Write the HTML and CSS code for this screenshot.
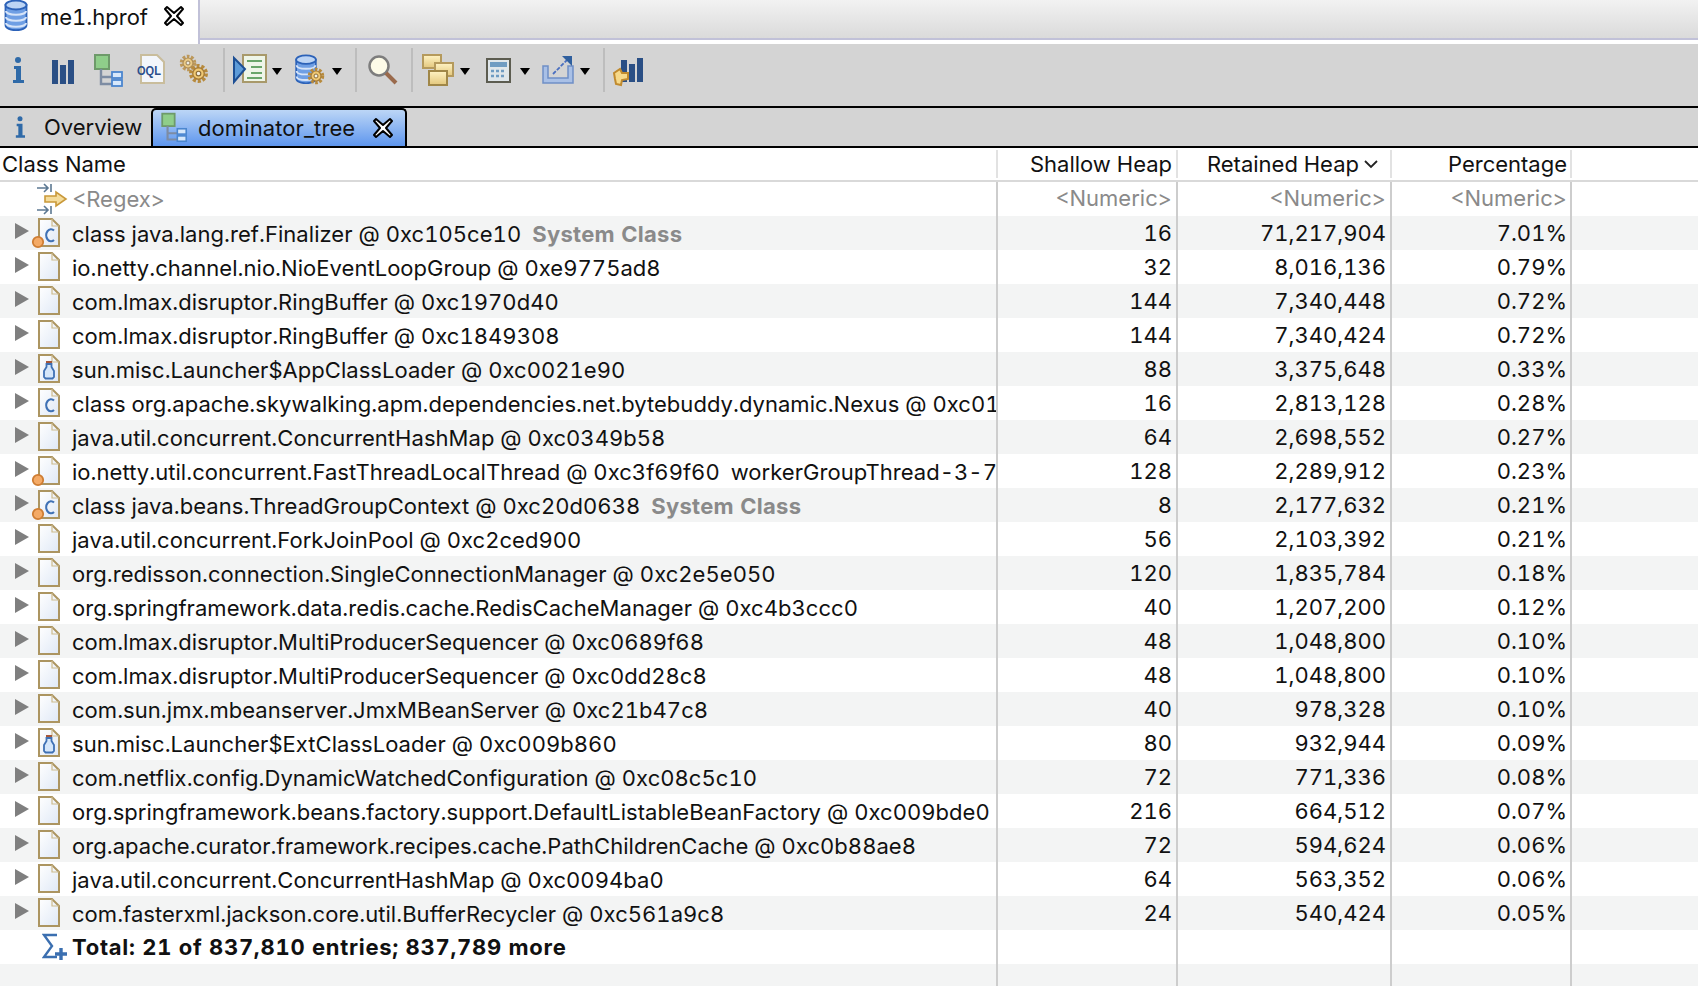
FILE: index.html
```html
<!DOCTYPE html>
<html lang="en">
<head>
  <meta charset="UTF-8" />
  <title>me1.hprof - dominator_tree</title>
  <link rel="stylesheet" href="styles.css">
</head>
<body>
  <svg class="defs" width="0" height="0">
    <defs>
      <linearGradient id="paper" x1="0" y1="0" x2="1" y2="1">
        <stop offset="0" stop-color="#ffffff"/>
        <stop offset="1" stop-color="#dfe8f6"/>
      </linearGradient>
      <linearGradient id="gold" x1="0" y1="0" x2="0" y2="1">
        <stop offset="0" stop-color="#fff3c4"/>
        <stop offset="1" stop-color="#e3c77c"/>
      </linearGradient>
      <symbol id="doc" viewBox="0 0 32 34">
        <path d="M9 3H22L29 10V30H9Z" fill="url(#paper)" stroke="#ac9561" stroke-width="2"/>
        <path d="M22 3V10H29" fill="none" stroke="#cdbb8e" stroke-width="1.2"/>
      </symbol>
      <symbol id="letter-c" viewBox="0 0 32 34">
        <path d="M24 14.500A4.800 6 0 1 0 24 24" fill="none" stroke="#3f71b5" stroke-width="2.200"/>
      </symbol>
      <symbol id="dot" viewBox="0 0 32 34">
        <circle cx="8" cy="26" r="5.200" fill="#f4aa66" stroke="#cf7d33" stroke-width="1.800"/>
      </symbol>
      <symbol id="bottle" viewBox="0 0 32 34">
        <path d="M16 9H22V12H16Z" fill="#a5573a"/>
        <path d="M16.500 12H21.500V15L24 19V25L22.500 26.500H15.500L14 25V19L16.500 15Z" fill="#d5e6fa" stroke="#3f71b5" stroke-width="1.800"/>
      </symbol>
      <symbol id="tree" viewBox="0 0 36 36">
        <rect x="7" y="3" width="14" height="14" fill="#8fce8a" stroke="#6e9a6a" stroke-width="2"/>
        <path d="M13 17V32H24M13 25H24" fill="none" stroke="#7d8ca3" stroke-width="2.400"/>
        <rect x="24" y="20" width="10" height="6" fill="#d7e8fb" stroke="#4b86cf" stroke-width="1.800"/>
        <rect x="24" y="28" width="10" height="6" fill="#d7e8fb" stroke="#4b86cf" stroke-width="1.800"/>
      </symbol>
      <symbol id="info" viewBox="0 0 36 36">
        <circle cx="18" cy="8" r="3" fill="#2f6aa8"/>
        <path d="M14 14H21V28H24V31H13V28H16V17H14Z" fill="#2f6aa8"/>
      </symbol>
      <symbol id="close" viewBox="0 0 22 22">
        <path d="M4 2L11 8L18 2L20 4L14 11L20 18L18 20L11 14L4 20L2 18L8 11L2 4Z" fill="#fff" stroke="#000" stroke-width="2" stroke-linejoin="round"/>
      </symbol>
      <symbol id="gear" viewBox="0 0 20 20">
        <circle cx="10" cy="10" r="6.500" fill="none" stroke="#b78a3c" stroke-width="3.500" stroke-dasharray="2.600 1.500"/>
        <circle cx="10" cy="10" r="5" fill="#efc873" stroke="#a77c36" stroke-width="1.200"/>
        <circle cx="10" cy="10" r="2" fill="#f4f1e6" stroke="#8a6a34"/>
      </symbol>
      <symbol id="dbmini" viewBox="0 0 24 32">
        <path d="M1.500 6V26C1.500 33 22.500 33 22.500 26V6Z" fill="#6f9fe4" stroke="#2c62b8" stroke-width="1.800"/>
        <path d="M2 12C2 17 22 17 22 12M2 18C2 23 22 23 22 18M2 24C2 29 22 29 22 24" fill="none" stroke="#d6e4f8" stroke-width="2"/>
        <ellipse cx="12" cy="6" rx="10.500" ry="4.500" fill="#bcd4f4" stroke="#2c62b8" stroke-width="1.800"/>
      </symbol>
    </defs>
  </svg>

  <div class="app">
    <div class="editor-tabs">
      <div class="editor-tab">
        <svg class="db-icon"><use href="#dbmini"/></svg>
        <span>me1.hprof</span>
        <svg class="close-icon"><use href="#close"/></svg>
      </div>
    </div>

    <div class="toolbar">
      <svg class="tool"><use href="#info"/></svg>
      <svg class="tool" viewBox="0 0 36 36">
        <rect x="8" y="8" width="6" height="24" fill="#2a4f85"/><rect x="16" y="13" width="6" height="19" fill="#2a4f85"/><rect x="24" y="8" width="6" height="24" fill="#2a4f85"/>
      </svg>
      <svg class="tool"><use href="#tree"/></svg>
      <svg class="tool" viewBox="0 0 36 36">
        <path d="M9 3H25L32 10V31H9Z" fill="#f3f6fb" stroke="#c9bd9c" stroke-width="2"/>
        <text x="5" y="23" class="oql" textLength="24" lengthAdjust="spacingAndGlyphs">OQL</text>
      </svg>
      <svg class="tool" viewBox="0 0 36 36">
        <use href="#gear" x="2" y="1" width="20" height="20" opacity="0.800"/>
        <use href="#gear" x="11" y="10" width="23" height="23"/>
      </svg>
      <i class="sep"></i>
      <svg class="tool" viewBox="0 0 36 36">
        <rect x="11" y="3" width="23" height="27" fill="#eef5e8" stroke="#a8996a" stroke-width="2"/>
        <path d="M15 9H30M19 15H30M19 21H30M15 26H30" stroke="#6aa56a" stroke-width="2"/>
        <path d="M2 6L13 17L2 30Z" fill="#5d9bd8" stroke="#1d4f94" stroke-width="2"/>
      </svg>
      <i class="drop"></i>
      <svg class="tool tool-next" viewBox="0 0 36 36">
        <use href="#dbmini" x="2" y="2" width="24" height="30"/>
        <use href="#gear" x="14" y="14" width="20" height="20"/>
      </svg>
      <i class="drop"></i>
      <i class="sep sep-narrow"></i>
      <svg class="tool" viewBox="0 0 36 36">
        <circle cx="15" cy="14" r="9.500" fill="#fdfbe8" stroke="#7d7d7d" stroke-width="2.500"/>
        <path d="M22 21L32 31" stroke="#9a6a4c" stroke-width="4"/>
      </svg>
      <i class="sep"></i>
      <svg class="tool" viewBox="0 0 36 36">
        <rect x="3" y="3" width="18" height="13" fill="url(#gold)" stroke="#b59a5c" stroke-width="2"/>
        <rect x="15" y="11" width="18" height="13" fill="url(#gold)" stroke="#b59a5c" stroke-width="2"/>
        <rect x="9" y="19" width="18" height="14" fill="url(#gold)" stroke="#a08748" stroke-width="2"/>
      </svg>
      <i class="drop"></i>
      <svg class="tool tool-next" viewBox="0 0 36 36">
        <rect x="7" y="7" width="23" height="23" fill="#dfe6ea" stroke="#5c5c50" stroke-width="2"/>
        <rect x="10" y="10" width="17" height="5" fill="#6f9cc2"/>
        <path d="M11 19H26M11 24H26" stroke="#6f9cc2" stroke-width="2.500" stroke-dasharray="3 2"/>
      </svg>
      <i class="drop"></i>
      <svg class="tool tool-next" viewBox="0 0 36 36">
        <path d="M3 14V31H33V14H28V26H8V14Z" fill="#a9c0e6" stroke="#6f8fc6" stroke-width="1.500"/>
        <path d="M13 22L28 7" stroke="#4a6fc0" stroke-width="1.800" stroke-dasharray="4 1.500"/>
        <path d="M22 4H32V14Z" fill="#2f5f9e"/>
      </svg>
      <i class="drop"></i>
      <i class="sep sep-last"></i>
      <svg class="tool" viewBox="0 0 36 36">
        <rect x="11" y="8" width="6" height="22" fill="#2a4f85"/><rect x="19" y="12" width="6" height="18" fill="#2a4f85"/><rect x="27" y="6" width="6" height="24" fill="#2a4f85"/>
        <path d="M4 21L10 17L12 21H18V27L12 28L11 33L6 32L5 27Z" fill="#f6d98a" stroke="#c08a2e" stroke-width="2"/>
      </svg>
    </div>

    <div class="view-tabs">
      <div class="view-tab">
        <svg class="view-info"><use href="#info"/></svg>
        <span>Overview</span>
      </div>
      <div class="view-tab view-tab-active">
        <svg class="view-tree"><use href="#tree"/></svg>
        <span>dominator_tree</span>
        <svg class="close-icon"><use href="#close"/></svg>
      </div>
    </div>

    <div class="table">
      <div class="row head">
        <div class="cell name">Class Name</div>
        <div class="cell num">Shallow Heap</div>
        <div class="cell num retained">Retained Heap<svg class="sort" viewBox="0 0 14 10"><path d="M1 2L7 8L13 2" fill="none" stroke="#222" stroke-width="1.800"/></svg></div>
        <div class="cell num">Percentage</div>
        <div class="cell rest"></div>
      </div>
      <div class="row filter">
        <div class="cell name">
          <svg class="filter-icon" viewBox="0 0 32 32">
            <path d="M1 5H12M8 1L12 5L8 9M15 1V9M1 27H12M8 23L12 27L8 31M15 23V31" fill="none" stroke="#5c7892" stroke-width="1.600"/>
            <path d="M9 13H20V9L30 16L20 23V19H9Z" fill="#f4dc9c" stroke="#c9993a" stroke-width="1.600"/>
          </svg>
          <span class="hint">&lt;Regex&gt;</span>
        </div>
        <div class="cell num hint">&lt;Numeric&gt;</div>
        <div class="cell num hint">&lt;Numeric&gt;</div>
        <div class="cell num hint">&lt;Numeric&gt;</div>
        <div class="cell rest"></div>
      </div>

      <div class="rows">
        <div class="row">
          <div class="cell name"><i class="twist"></i><svg class="obj"><use href="#doc"/><use href="#letter-c"/><use href="#dot"/></svg><span class="label">class java.lang.ref.Finalizer @ 0xc105ce10 <b class="tag">System Class</b></span></div>
          <div class="cell num">16</div><div class="cell num">71,217,904</div><div class="cell num">7.01%</div><div class="cell rest"></div>
        </div>
        <div class="row">
          <div class="cell name"><i class="twist"></i><svg class="obj"><use href="#doc"/></svg><span class="label">io.netty.channel.nio.NioEventLoopGroup @ 0xe9775ad8</span></div>
          <div class="cell num">32</div><div class="cell num">8,016,136</div><div class="cell num">0.79%</div><div class="cell rest"></div>
        </div>
        <div class="row">
          <div class="cell name"><i class="twist"></i><svg class="obj"><use href="#doc"/></svg><span class="label">com.lmax.disruptor.RingBuffer @ 0xc1970d40</span></div>
          <div class="cell num">144</div><div class="cell num">7,340,448</div><div class="cell num">0.72%</div><div class="cell rest"></div>
        </div>
        <div class="row">
          <div class="cell name"><i class="twist"></i><svg class="obj"><use href="#doc"/></svg><span class="label">com.lmax.disruptor.RingBuffer @ 0xc1849308</span></div>
          <div class="cell num">144</div><div class="cell num">7,340,424</div><div class="cell num">0.72%</div><div class="cell rest"></div>
        </div>
        <div class="row">
          <div class="cell name"><i class="twist"></i><svg class="obj"><use href="#doc"/><use href="#bottle"/></svg><span class="label">sun.misc.Launcher$AppClassLoader @ 0xc0021e90</span></div>
          <div class="cell num">88</div><div class="cell num">3,375,648</div><div class="cell num">0.33%</div><div class="cell rest"></div>
        </div>
        <div class="row">
          <div class="cell name"><i class="twist"></i><svg class="obj"><use href="#doc"/><use href="#letter-c"/></svg><span class="label">class org.apache.skywalking.apm.dependencies.net.bytebuddy.dynamic.Nexus @ 0xc01a3b48</span></div>
          <div class="cell num">16</div><div class="cell num">2,813,128</div><div class="cell num">0.28%</div><div class="cell rest"></div>
        </div>
        <div class="row">
          <div class="cell name"><i class="twist"></i><svg class="obj"><use href="#doc"/></svg><span class="label">java.util.concurrent.ConcurrentHashMap @ 0xc0349b58</span></div>
          <div class="cell num">64</div><div class="cell num">2,698,552</div><div class="cell num">0.27%</div><div class="cell rest"></div>
        </div>
        <div class="row">
          <div class="cell name"><i class="twist"></i><svg class="obj"><use href="#doc"/><use href="#dot"/></svg><span class="label">io.netty.util.concurrent.FastThreadLocalThread @ 0xc3f69f60 <span class="thread">workerGroupThread-3-7:</span></span></div>
          <div class="cell num">128</div><div class="cell num">2,289,912</div><div class="cell num">0.23%</div><div class="cell rest"></div>
        </div>
        <div class="row">
          <div class="cell name"><i class="twist"></i><svg class="obj"><use href="#doc"/><use href="#letter-c"/><use href="#dot"/></svg><span class="label">class java.beans.ThreadGroupContext @ 0xc20d0638 <b class="tag">System Class</b></span></div>
          <div class="cell num">8</div><div class="cell num">2,177,632</div><div class="cell num">0.21%</div><div class="cell rest"></div>
        </div>
        <div class="row">
          <div class="cell name"><i class="twist"></i><svg class="obj"><use href="#doc"/></svg><span class="label">java.util.concurrent.ForkJoinPool @ 0xc2ced900</span></div>
          <div class="cell num">56</div><div class="cell num">2,103,392</div><div class="cell num">0.21%</div><div class="cell rest"></div>
        </div>
        <div class="row">
          <div class="cell name"><i class="twist"></i><svg class="obj"><use href="#doc"/></svg><span class="label">org.redisson.connection.SingleConnectionManager @ 0xc2e5e050</span></div>
          <div class="cell num">120</div><div class="cell num">1,835,784</div><div class="cell num">0.18%</div><div class="cell rest"></div>
        </div>
        <div class="row">
          <div class="cell name"><i class="twist"></i><svg class="obj"><use href="#doc"/></svg><span class="label">org.springframework.data.redis.cache.RedisCacheManager @ 0xc4b3ccc0</span></div>
          <div class="cell num">40</div><div class="cell num">1,207,200</div><div class="cell num">0.12%</div><div class="cell rest"></div>
        </div>
        <div class="row">
          <div class="cell name"><i class="twist"></i><svg class="obj"><use href="#doc"/></svg><span class="label">com.lmax.disruptor.MultiProducerSequencer @ 0xc0689f68</span></div>
          <div class="cell num">48</div><div class="cell num">1,048,800</div><div class="cell num">0.10%</div><div class="cell rest"></div>
        </div>
        <div class="row">
          <div class="cell name"><i class="twist"></i><svg class="obj"><use href="#doc"/></svg><span class="label">com.lmax.disruptor.MultiProducerSequencer @ 0xc0dd28c8</span></div>
          <div class="cell num">48</div><div class="cell num">1,048,800</div><div class="cell num">0.10%</div><div class="cell rest"></div>
        </div>
        <div class="row">
          <div class="cell name"><i class="twist"></i><svg class="obj"><use href="#doc"/></svg><span class="label">com.sun.jmx.mbeanserver.JmxMBeanServer @ 0xc21b47c8</span></div>
          <div class="cell num">40</div><div class="cell num">978,328</div><div class="cell num">0.10%</div><div class="cell rest"></div>
        </div>
        <div class="row">
          <div class="cell name"><i class="twist"></i><svg class="obj"><use href="#doc"/><use href="#bottle"/></svg><span class="label">sun.misc.Launcher$ExtClassLoader @ 0xc009b860</span></div>
          <div class="cell num">80</div><div class="cell num">932,944</div><div class="cell num">0.09%</div><div class="cell rest"></div>
        </div>
        <div class="row">
          <div class="cell name"><i class="twist"></i><svg class="obj"><use href="#doc"/></svg><span class="label">com.netflix.config.DynamicWatchedConfiguration @ 0xc08c5c10</span></div>
          <div class="cell num">72</div><div class="cell num">771,336</div><div class="cell num">0.08%</div><div class="cell rest"></div>
        </div>
        <div class="row">
          <div class="cell name"><i class="twist"></i><svg class="obj"><use href="#doc"/></svg><span class="label">org.springframework.beans.factory.support.DefaultListableBeanFactory @ 0xc009bde0</span></div>
          <div class="cell num">216</div><div class="cell num">664,512</div><div class="cell num">0.07%</div><div class="cell rest"></div>
        </div>
        <div class="row">
          <div class="cell name"><i class="twist"></i><svg class="obj"><use href="#doc"/></svg><span class="label">org.apache.curator.framework.recipes.cache.PathChildrenCache @ 0xc0b88ae8</span></div>
          <div class="cell num">72</div><div class="cell num">594,624</div><div class="cell num">0.06%</div><div class="cell rest"></div>
        </div>
        <div class="row">
          <div class="cell name"><i class="twist"></i><svg class="obj"><use href="#doc"/></svg><span class="label">java.util.concurrent.ConcurrentHashMap @ 0xc0094ba0</span></div>
          <div class="cell num">64</div><div class="cell num">563,352</div><div class="cell num">0.06%</div><div class="cell rest"></div>
        </div>
        <div class="row">
          <div class="cell name"><i class="twist"></i><svg class="obj"><use href="#doc"/></svg><span class="label">com.fasterxml.jackson.core.util.BufferRecycler @ 0xc561a9c8</span></div>
          <div class="cell num">24</div><div class="cell num">540,424</div><div class="cell num">0.05%</div><div class="cell rest"></div>
        </div>
        <div class="row total">
          <div class="cell name">
            <svg class="sum-icon" viewBox="0 0 26 28">
              <path d="M15 2H2L10 13L2 24H15" fill="none" stroke="#3b6fb0" stroke-width="2.400"/>
              <path d="M19 15V27M13 21H25" stroke="#3b6fb0" stroke-width="3.400"/>
            </svg>
            <b>Total: 21 of 837,810 entries; 837,789 more</b>
          </div>
          <div class="cell num"></div><div class="cell num"></div><div class="cell num"></div><div class="cell rest"></div>
        </div>
        <div class="row empty">
          <div class="cell name"></div><div class="cell num"></div><div class="cell num"></div><div class="cell num"></div><div class="cell rest"></div>
        </div>
      </div>
    </div>
  </div>
</body>
</html>
```

FILE: styles.css
```css
* {
  margin: 0;
  padding: 0;
  box-sizing: border-box;
}

html, body {
  height: 100%;
  overflow: hidden;
}

body {
  background: #fff;
  color: #111;
  font-family: "Inter", "Liberation Sans", sans-serif;
  font-size: 22px;
  font-variant-numeric: tabular-nums;
  font-feature-settings: "tnum";
}

.defs {
  position: absolute;
}

.app {
  display: flex;
  flex-direction: column;
  height: 986px;
}

/* top strip with the heap dump tab */
.editor-tabs {
  height: 44px;
  flex: none;
  border-bottom: 4px solid #fff;
  background: linear-gradient(#f2f2f2, #d9d9d9);
  box-shadow: inset 0 -2px 0 #c1c1d8;
}

.editor-tab {
  display: flex;
  align-items: center;
  width: 200px;
  height: 44px;
  padding: 0 0 10px 4px;
  background: #fff;
  border-right: 2px solid #c1c1d8;
}

.db-icon {
  width: 24px;
  height: 32px;
  margin-top: -4px;
}

.editor-tab span {
  margin-left: 12px;
}

.close-icon {
  width: 22px;
  height: 22px;
  flex: none;
}

.editor-tab .close-icon {
  margin-left: 15px;
  margin-top: -2px;
}

/* toolbar */
.toolbar {
  display: flex;
  align-items: center;
  height: 64px;
  flex: none;
  gap: 8px;
  padding-bottom: 10px;
  background: #d4d4d4;
  border-bottom: 2px solid #000;
}

.tool {
  width: 36px;
  height: 36px;
  flex: none;
}

.oql {
  font-family: "Liberation Sans", sans-serif;
  font-size: 12px;
  font-weight: 700;
  fill: #2c4f8c;
}

.sep {
  width: 2px;
  height: 44px;
  margin: 0 -1px 0 3px;
  background: #bdbdbd;
}

.sep-narrow {
  margin-left: 5px;
}

.sep-last {
  margin-left: 5px;
  margin-right: -3px;
}

.drop {
  width: 0;
  height: 0;
  margin-left: -4px;
  margin-top: 2px;
  border-left: 5px solid transparent;
  border-right: 5px solid transparent;
  border-top: 7px solid #000;
}

.tool-next {
  margin-left: 2px;
}

/* view tabs */
.view-tabs {
  display: flex;
  height: 40px;
  flex: none;
  background: #d4d4d4;
  border-bottom: 2px solid #000;
}

.view-tab {
  display: flex;
  align-items: center;
  height: 38px;
}

.view-tab:first-child {
  width: 151px;
}

.view-info {
  width: 36px;
  height: 30px;
  flex: none;
  margin-left: 2px;
}

.view-tab:first-child span {
  margin-left: 6px;
}

.view-tab-active {
  width: 256px;
  padding-left: 3px;
  background: linear-gradient(#bcd6f6, #5e96ee);
  border: 2px solid #000;
  border-bottom: 0;
  border-radius: 5px 5px 0 0;
}

.view-tree {
  width: 32px;
  height: 32px;
  flex: none;
  margin-top: -2px;
}

.view-tab-active span {
  margin-left: 10px;
  letter-spacing: 0.1px;
}

.view-tab-active .close-icon {
  margin-left: 17px;
}

/* table */
.table {
  flex: 1;
  display: flex;
  flex-direction: column;
  min-height: 0;
}

.row {
  display: grid;
  grid-template-columns: 998px 180px 214px 180px 1fr;
  height: 34px;
  flex: none;
}

.cell {
  display: flex;
  align-items: center;
  height: 100%;
  overflow: hidden;
  white-space: nowrap;
  border-right: 2px solid #cdcdcd;
}

.cell.rest {
  border-right: 0;
}

.cell.num {
  justify-content: flex-end;
  padding-right: 4px;
  padding-bottom: 1px;
}

.cell.num:nth-child(4) {
  padding-right: 3px;
}

.rows .name {
  padding-top: 2px;
}

.head {
  height: 34px;
  border-bottom: 2px solid #d9d9d9;
}

.head .cell {
  height: 28px;
  margin-top: 2px;
  border-right-color: #e2e2e2;
  padding-bottom: 0;
  padding-right: 4px;
}

.head .cell:nth-child(4) {
  padding-right: 3px;
}

.head .name {
  padding-left: 2px;
}

.filter .cell.num {
  padding-bottom: 3px;
}

.head .retained {
  padding-right: 12px;
}

.sort {
  width: 14px;
  height: 10px;
  margin-left: 5px;
}

.filter-icon {
  width: 32px;
  height: 32px;
  margin-left: 36px;
  flex: none;
}

.hint {
  color: #8a8a8a;
}

.filter .name .hint {
  margin-left: 4px;
}

.rows {
  flex: 1;
  display: flex;
  flex-direction: column;
}

.rows .row:nth-child(odd) {
  background: #f3f4f4;
}

.twist {
  width: 0;
  height: 0;
  flex: none;
  margin: -7px 0 0 15px;
  border-top: 8px solid transparent;
  border-bottom: 8px solid transparent;
  border-left: 14px solid #7f7f7f;
}

.obj {
  width: 32px;
  height: 34px;
  flex: none;
  margin: -2px 0 0 1px;
}

.label {
  margin-left: 10px;
  letter-spacing: 0.04px;
}

.tag {
  margin-left: 5px;
  color: #8a8a8a;
  letter-spacing: 0.3px;
}

.thread {
  margin-left: 5px;
}

.sum-icon {
  width: 26px;
  height: 28px;
  margin-left: 42px;
  flex: none;
}

.rows .total .name {
  padding-top: 0;
}

.total b {
  margin-left: 4px;
  font-weight: 700;
  letter-spacing: 0.72px;
}

.empty {
  flex: 1;
}
```
